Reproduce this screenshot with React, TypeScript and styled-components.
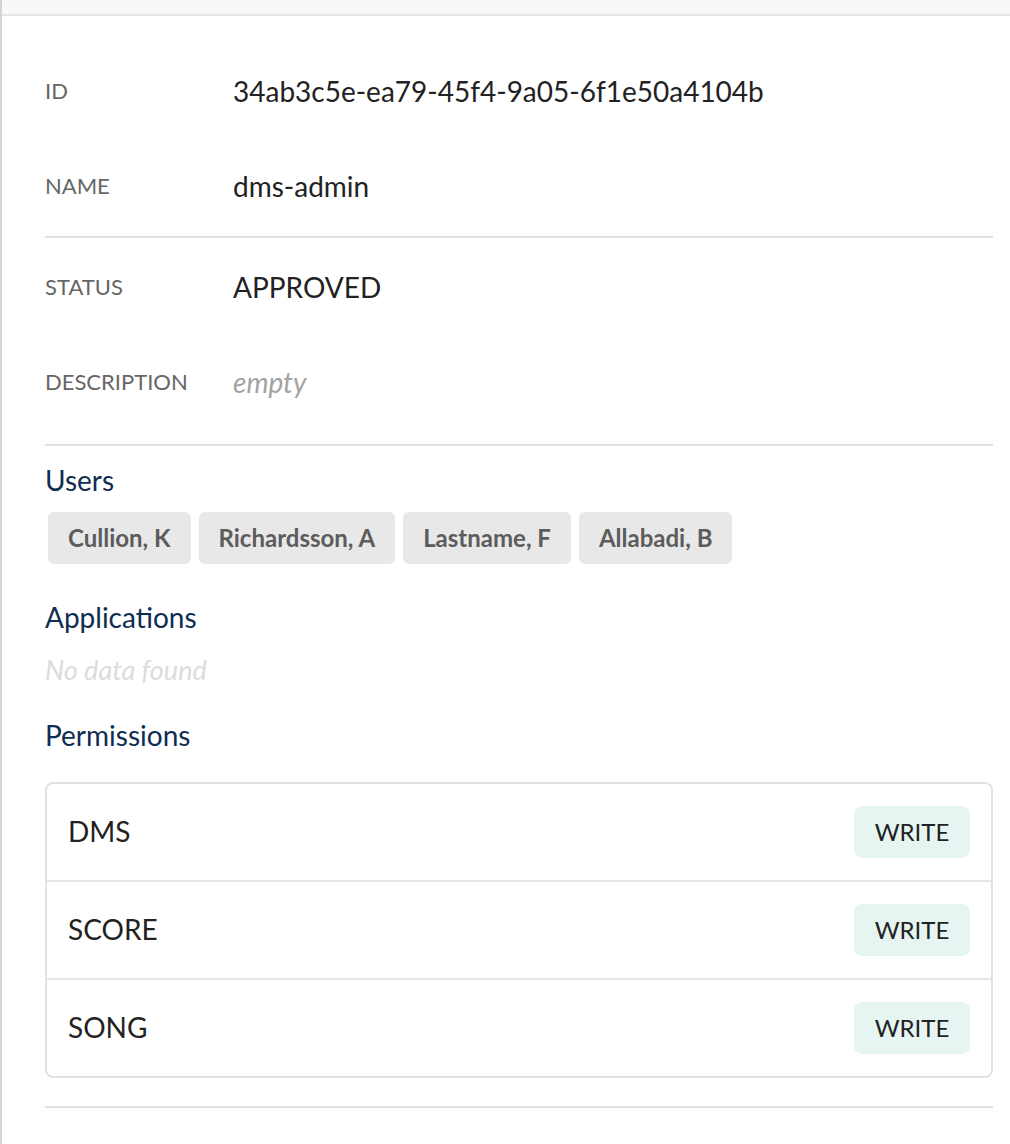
import React from "react";
import styled, { createGlobalStyle } from "styled-components";

const GlobalStyle = createGlobalStyle`
  html, body { margin: 0; padding: 0; background: #ffffff; }
  body { font-family: Lato, "Open Sans", Arial, sans-serif; color: #222; }
  * { box-sizing: border-box; }
`;

const Page = styled.div`
  min-height: 1144px;
  border-left: 2px solid #d4d4d4;
  background: #fff;
`;

const TopBar = styled.div`
  height: 16px;
  background: #f8f8f8;
  border-bottom: 2px solid #e6e6e6;
`;

const Content = styled.div`
  padding: 0 17px 0 43px;
  display: flex;
  flex-direction: column;
`;

const FieldGroup = styled.div<{ $top: number; $bottom: number }>`
  padding-top: ${(p) => p.$top}px;
  padding-bottom: ${(p) => p.$bottom}px;
  display: flex;
  flex-direction: column;
`;

const FieldRow = styled.div`
  display: grid;
  grid-template-columns: 188px 1fr;
  align-items: center;
  height: 95px;
`;

const Label = styled.div`
  font-size: 22px;
  line-height: 1.2;
  color: #666;
  text-transform: uppercase;
`;

const Value = styled.div<{ $empty?: boolean }>`
  font-size: 28px;
  line-height: 1.2;
  color: ${(p) => (p.$empty ? "#a3a3a3" : "#222")};
  font-style: ${(p) => (p.$empty ? "italic" : "normal")};
`;

const Divider = styled.hr<{ $mt?: number }>`
  margin: ${(p) => p.$mt ?? 0}px 0 0;
  border: none;
  height: 2px;
  background: #e2e2e2;
`;

const Heading = styled.h3<{ $mt: number }>`
  margin: ${(p) => p.$mt}px 0 0;
  font-size: 28px;
  line-height: 1.2;
  font-weight: 400;
  color: #0f2d52;
`;

const ChipList = styled.div`
  display: flex;
  flex-wrap: wrap;
  gap: 8px;
  margin-top: 14px;
  padding-left: 3px;
`;

const Chip = styled.span`
  display: inline-flex;
  align-items: center;
  height: 52px;
  padding: 0 20px;
  border-radius: 6px;
  background: #e8e8e8;
  color: #5c5c5c;
  font-size: 24px;
  font-weight: 700;
`;

const NoData = styled.div`
  margin-top: 20px;
  font-size: 27px;
  line-height: 1.2;
  font-style: italic;
  color: #dcdcdc;
`;

const Table = styled.div`
  margin-top: 30px;
  border: 2px solid #e2e2e2;
  border-radius: 8px;
  display: flex;
  flex-direction: column;
`;

const TableRow = styled.div`
  display: flex;
  align-items: center;
  justify-content: space-between;
  height: 96px;
  padding: 0 21px 1px 21px;
  & + & { border-top: 2px solid #e6e6e6; height: 98px; }
`;

const RowName = styled.span`
  font-size: 28px;
  line-height: 1.2;
  color: #222;
`;

const Badge = styled.span`
  display: inline-flex;
  align-items: center;
  justify-content: center;
  width: 116px;
  height: 52px;
  border-radius: 8px;
  background: #e6f5f2;
  color: #222;
  font-size: 24px;
`;

const fields1 = [
  { label: "ID", value: "34ab3c5e-ea79-45f4-9a05-6f1e50a4104b" },
  { label: "Name", value: "dms-admin" },
];

const users = ["Cullion, K", "Richardsson, A", "Lastname, F", "Allabadi, B"];
const permissions = ["DMS", "SCORE", "SONG"];

export default function App() {
  return (
    <>
      <GlobalStyle />
      <Page>
        <TopBar />
        <Content>
          <FieldGroup $top={28} $bottom={2}>
            {fields1.map((f) => (
              <FieldRow key={f.label}>
                <Label>{f.label}</Label>
                <Value>{f.value}</Value>
              </FieldRow>
            ))}
          </FieldGroup>
          <Divider />
          <FieldGroup $top={2} $bottom={14}>
            <FieldRow>
              <Label>Status</Label>
              <Value>APPROVED</Value>
            </FieldRow>
            <FieldRow>
              <Label>Description</Label>
              <Value $empty>empty</Value>
            </FieldRow>
          </FieldGroup>
          <Divider />
          <Heading $mt={18}>Users</Heading>
          <ChipList>
            {users.map((u) => (
              <Chip key={u}>{u}</Chip>
            ))}
          </ChipList>
          <Heading $mt={37}>Applications</Heading>
          <NoData>No data found</NoData>
          <Heading $mt={32}>Permissions</Heading>
          <Table>
            {permissions.map((p) => (
              <TableRow key={p}>
                <RowName>{p}</RowName>
                <Badge>WRITE</Badge>
              </TableRow>
            ))}
          </Table>
          <Divider $mt={28} />
        </Content>
      </Page>
    </>
  );
}
